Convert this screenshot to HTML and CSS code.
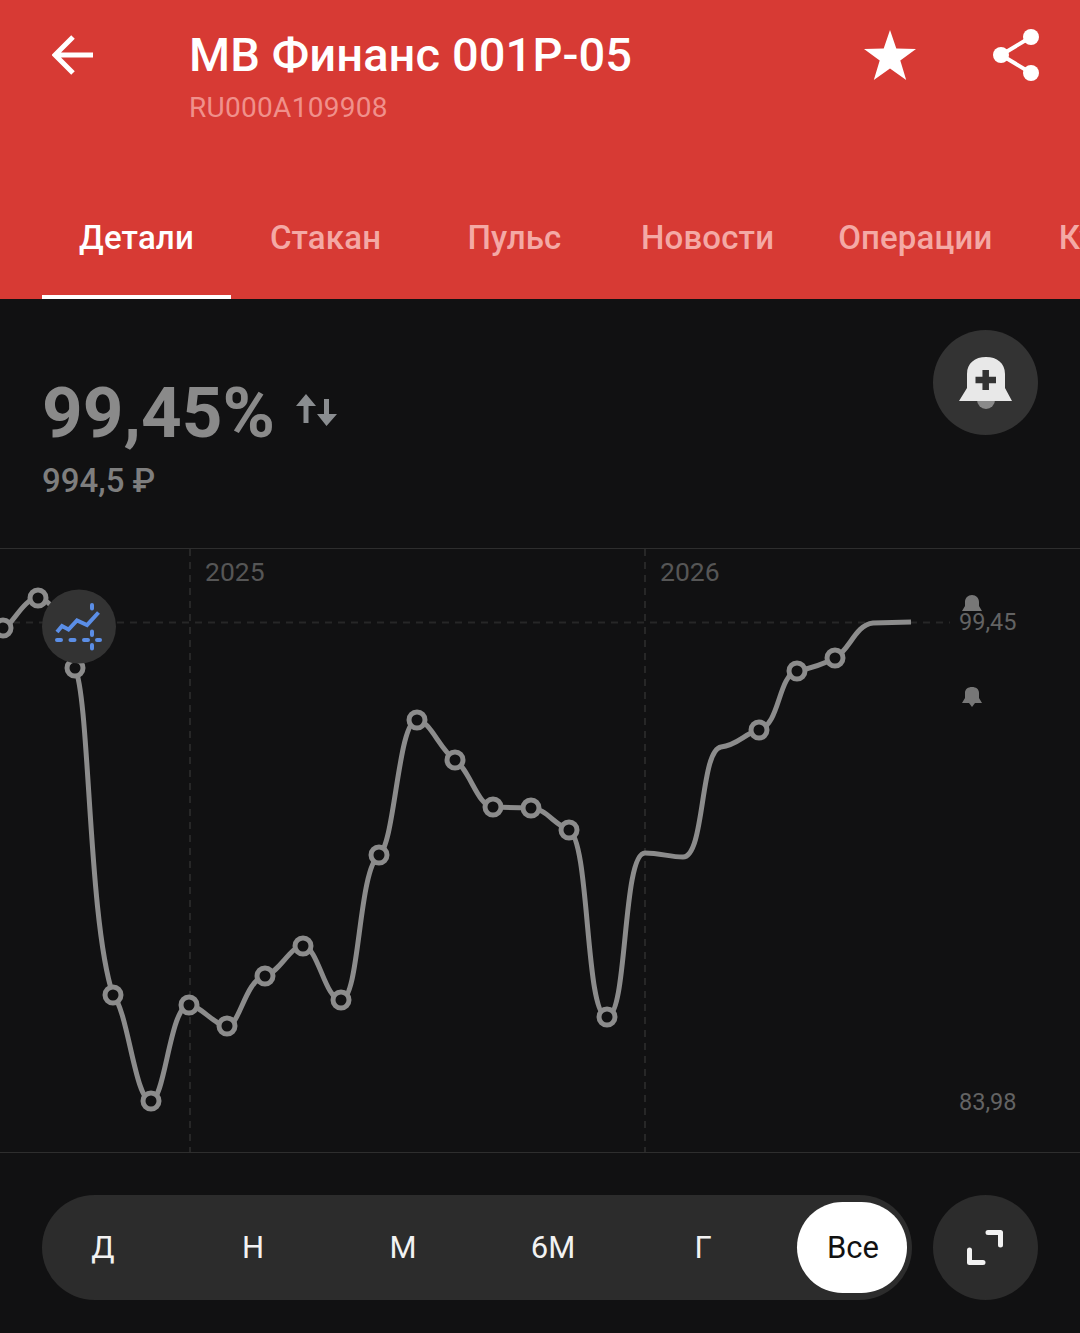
FILE: index.html
```html
<!DOCTYPE html>
<html lang="ru">
<head>
    <meta charset="UTF-8">
    <meta name="viewport" content="width=device-width, initial-scale=1.0">
    <title>МВ Финанс 001Р-05</title>
    <link rel="stylesheet" href="styles.css">
</head>
<body>
    <div class="screen">
        <header class="header">
            <div class="header-top">
                <svg class="icon-back" width="42" height="42" viewBox="0 0 42 42">
                    <path d="M41 21H4M21 3L3 21L21 39" fill="none" stroke="#fff" stroke-width="5"/>
                </svg>
                <div class="title-block">
                    <h1 class="title">МВ Финанс 001Р-05</h1>
                    <div class="isin">RU000A109908</div>
                </div>
                <svg class="icon-star" width="52" height="50" viewBox="0 0 52 50">
                    <polygon points="26,0 32.3,18.4 52,19 36.3,30.6 42.2,50 26,38.4 9.8,50 15.7,30.6 0,19 19.7,18.4" fill="#fff"/>
                </svg>
                <svg class="icon-share" width="48" height="54" viewBox="0 0 48 54">
                    <path d="M39 9L9 27L39 45" fill="none" stroke="#fff" stroke-width="4"/>
                    <circle cx="39" cy="9" r="8" fill="#fff"/>
                    <circle cx="9" cy="27" r="8" fill="#fff"/>
                    <circle cx="39" cy="45" r="8" fill="#fff"/>
                </svg>
            </div>
            <nav class="tabs">
                <div class="tab active">Детали</div>
                <div class="tab">Стакан</div>
                <div class="tab">Пульс</div>
                <div class="tab">Новости</div>
                <div class="tab">Операции</div>
                <div class="tab">Купоны</div>
            </nav>
        </header>

        <section class="info">
            <div class="price-block">
                <div class="price-row">
                    <span class="price">99,45%</span>
                    <svg class="icon-arrows" width="42" height="34" viewBox="0 0 42 34">
                        <path d="M10 0L20 12H12.5V29H7.5V12H0Z" fill="#8a8d90"/>
                        <path d="M28 5H33V20H41L30.5 32L21 20H28Z" fill="#8a8d90"/>
                    </svg>
                </div>
                <div class="price-sub">994,5 ₽</div>
            </div>
            <div class="round-btn">
                <svg width="105" height="105" viewBox="0 0 105 105">
                    <path d="M44 70A9 9 0 0 0 62 70Z" fill="#8a8a8a"/>
                    <path d="M26 71L34 58V44C34 33 42 27 53 27C64 27 72 33 72 44V58L79 71Z" fill="#e8e8e8"/>
                    <path d="M42.5 50H63M52.7 40V60" fill="none" stroke="#333" stroke-width="6.5"/>
                </svg>
            </div>
        </section>

        <section class="chart">
            <svg class="chart-svg" width="1080" height="603" viewBox="0 549 1080 603">
                <g class="grid">
                    <path d="M190 549V1152M645 549V1152"/>
                    <path d="M0 622.5H950"/>
                </g>
                <text class="year" x="205" y="581">2025</text>
                <text class="year" x="660" y="581">2026</text>

                <path class="line" d="M-20 648L5 628C15 620 25 598 38 598C55 598 70 640 75 668C90 700 88 920 113 995C128 1010 135 1101 151 1101C165 1101 170 1005 189 1005C200 1005 215 1026 227 1026C240 1026 245 980 265 976C280 972 290 946 303 946C318 946 325 1000 341 1000C360 1000 358 870 379 855C395 845 398 720 417 720C430 720 440 750 455 760C470 770 478 807 493 807L531 808C545 808 555 825 569 830C590 840 585 1017 607 1017C628 1017 622 853 645 853C660 853 670 857 683 857C705 857 700 750 721 747C738 745 745 733 759 730C780 725 778 675 797 671C812 668 822 665 835 658C850 650 855 625 873 623L911 622"/>
                <g class="dots">
                    <circle cx="3" cy="628" r="8"/>
                    <circle cx="38" cy="598" r="8"/>
                    <circle cx="75" cy="668" r="8"/>
                    <circle cx="113" cy="995" r="8"/>
                    <circle cx="151" cy="1101" r="8"/>
                    <circle cx="189" cy="1005" r="8"/>
                    <circle cx="227" cy="1026" r="8"/>
                    <circle cx="265" cy="976" r="8"/>
                    <circle cx="303" cy="946" r="8"/>
                    <circle cx="341" cy="1000" r="8"/>
                    <circle cx="379" cy="855" r="8"/>
                    <circle cx="417" cy="720" r="8"/>
                    <circle cx="455" cy="760" r="8"/>
                    <circle cx="493" cy="807" r="8"/>
                    <circle cx="531" cy="808" r="8"/>
                    <circle cx="569" cy="830" r="8"/>
                    <circle cx="607" cy="1017" r="8"/>
                    <circle cx="759" cy="730" r="8"/>
                    <circle cx="797" cy="671" r="8"/>
                    <circle cx="835" cy="658" r="8"/>
                </g>

                <!-- forecast button -->
                <circle cx="79" cy="626.5" r="37" fill="#333"/>
                <path d="M57 632L62 626L68.5 629.5L77 620.5L87 625L98.5 612.5" fill="none" stroke="#5b8ee6" stroke-width="4"/>
                <path d="M57 640H61M70.5 640H74.5M84 640H88M97 640H100M92 605V608.500M92 631.500V635M92 645V648.500" fill="none" stroke="#5b8ee6" stroke-width="4" stroke-linecap="round"/>

                <!-- price alerts -->
                <path class="small-bell" d="M962 611L965 606V602C965 598 968 595 972 595C976 595 979 598 979 602V606L982 611Z"/>
                <path class="small-bell" d="M962 703L965 698V693C965 689 968 687 972 687C976 687 979 689 979 693V698L982 703ZM969 703H975L972 707Z"/>
                <text class="axis" x="959" y="630">99,45</text>
                <text class="axis" x="959" y="1110">83,98</text>
            </svg>
        </section>

        <section class="controls">
            <div class="periods">
                <div class="period">Д</div>
                <div class="period">Н</div>
                <div class="period">М</div>
                <div class="period">6М</div>
                <div class="period">Г</div>
                <div class="period selected">Все</div>
            </div>
            <div class="round-btn dark">
                <svg width="105" height="105" viewBox="0 0 105 105">
                    <path d="M55 37.500H67.500V50M36.500 55V67.500H50" fill="none" stroke="#f2f2f2" stroke-width="5" stroke-linecap="round" stroke-linejoin="round"/>
                </svg>
            </div>
        </section>
    </div>
</body>
</html>
```

FILE: styles.css
```css
* {
    box-sizing: border-box;
}
html, body {
    margin: 0;
    padding: 0;
}
body {
    font-family: Roboto, "Noto Sans", sans-serif;
    background-color: #111112;
}
.screen {
    width: 1080px;
    height: 1333px;
    overflow: hidden;
}

/* Red header */
.header {
    height: 299px;
    background-color: #d73a34;
    display: flex;
    flex-direction: column;
    justify-content: space-between;
}
.header-top {
    display: flex;
    align-items: flex-start;
    padding: 27px 40px 0 52px;
}
.icon-back {
    margin-top: 7px;
    margin-right: 95px;
}
.title-block {
    flex: 1;
}
.title {
    margin: 0;
    font-size: 47px;
    font-weight: 500;
    line-height: 56px;
    letter-spacing: 0.1px;
    color: #fff;
}
.isin {
    margin-top: 3px;
    font-size: 28px;
    line-height: 44px;
    letter-spacing: 0.3px;
    color: #f0908b;
}
.icon-star {
    margin-top: 3px;
    margin-right: 76px;
}
.icon-share {
    margin-top: 1px;
}
.tabs {
    display: flex;
    padding-left: 42px;
    overflow: hidden;
}
.tab {
    flex: none;
    min-width: 189px;
    height: 83px;
    padding: 0 32px;
    text-align: center;
    font-size: 33px;
    font-weight: 500;
    line-height: 44px;
    letter-spacing: 0.15px;
    color: #f4a9a5;
}
.tab.active {
    color: #fff;
    border-bottom: 4px solid #fff;
}

/* Price */
.info {
    height: 249px;
    padding: 31px 42px 0;
    display: flex;
    justify-content: space-between;
    align-items: flex-start;
}
.price-block {
    padding-top: 38px;
}
.price-row {
    display: flex;
    align-items: flex-start;
}
.price {
    font-size: 71px;
    font-weight: 700;
    line-height: 90px;
    color: #8a8a8a;
}
.icon-arrows {
    margin-top: 26px;
    margin-left: 21px;
}
.price-sub {
    margin-top: 2px;
    font-size: 33px;
    font-weight: 500;
    line-height: 42px;
    color: #7e7e7e;
}
.round-btn {
    flex: none;
    width: 105px;
    height: 105px;
    border-radius: 50%;
    background-color: #333;
}
.round-btn svg {
    display: block;
}
.round-btn.dark {
    background-color: #2c2c2c;
}

/* Chart */
.chart {
    height: 605px;
    border-top: 1px solid #2e2e2e;
    border-bottom: 1px solid #2e2e2e;
}
.chart-svg {
    display: block;
}
.grid path {
    fill: none;
    stroke: #272727;
    stroke-width: 2;
    stroke-dasharray: 7 6;
}
.year {
    font-size: 26.500px;
    fill: #565656;
}
.axis {
    font-size: 23.500px;
    fill: #636363;
}
.line {
    fill: none;
    stroke: #8c8c8c;
    stroke-width: 5;
}
.dots circle {
    fill: #111112;
    stroke: #8c8c8c;
    stroke-width: 5;
}
.small-bell {
    fill: #777;
}

/* Period switch */
.controls {
    padding: 42px 42px 0;
    display: flex;
    justify-content: space-between;
}
.periods {
    width: 870px;
    height: 105px;
    padding: 7px 5px;
    border-radius: 53px;
    background-color: #2c2c2c;
    display: flex;
    gap: 40px;
}
.period {
    width: 110px;
    height: 91px;
    padding-left: 2px;
    border-radius: 46px;
    text-align: center;
    font-size: 31px;
    line-height: 91px;
    color: #f2f2f2;
}
.period.selected {
    background-color: #fff;
    color: #111;
}
```
